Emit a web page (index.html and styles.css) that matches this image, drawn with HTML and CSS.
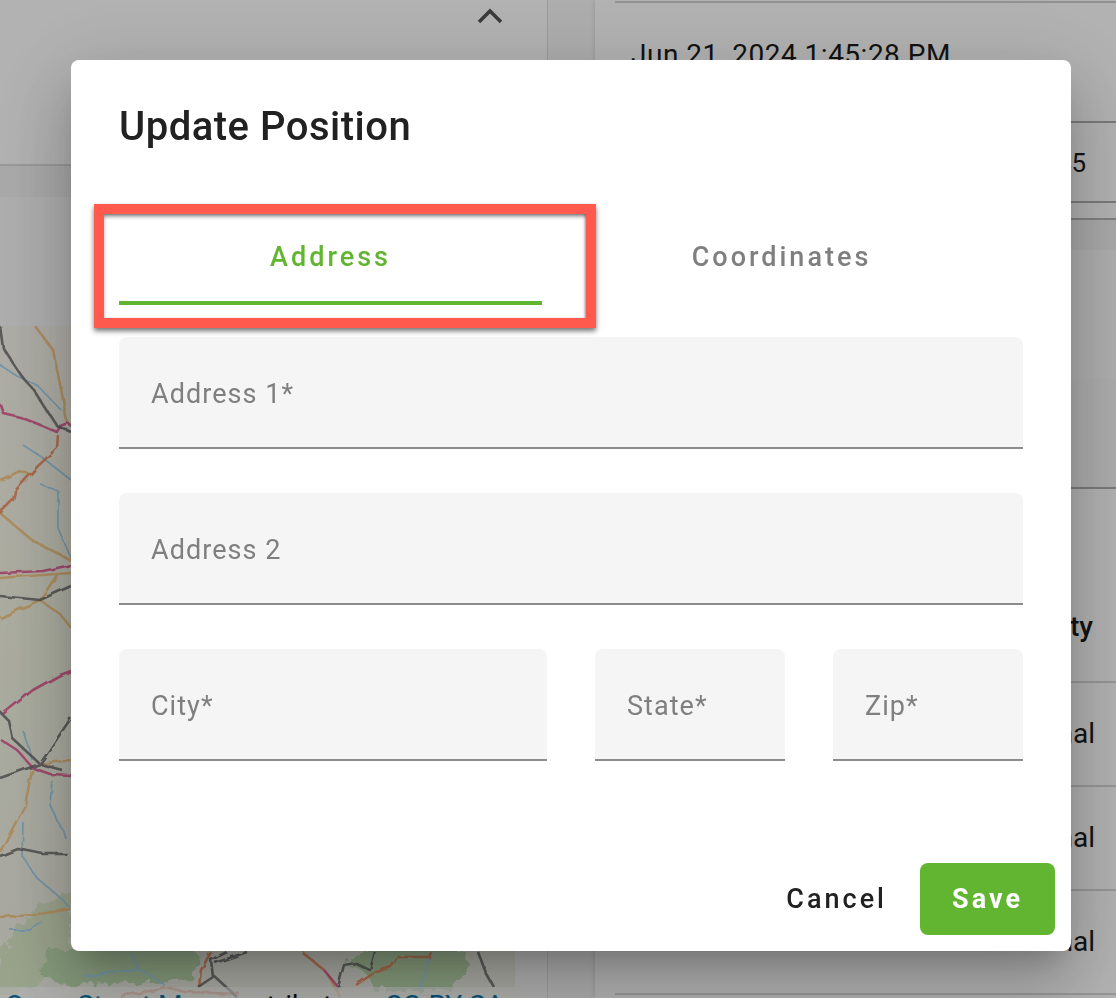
FILE: index.html
```html
<!DOCTYPE html>
<html lang="en">
<head>
  <meta charset="UTF-8">
  <title>Update Position</title>
  <link rel="stylesheet" href="styles.css">
</head>
<body>
<div class="page">
  <div class="left-col">
    <div class="summary-card">
      <svg class="chevron" width="26" height="16" viewBox="0 0 26 16"><path d="M2 14 L13 3 L24 14" fill="none" stroke="#555" stroke-width="3.6"/></svg>
    </div>
    <div class="left-gap"></div>
    <div class="map-head"></div>
    <div class="map">
      <svg class="map-art" width="515" height="672" viewBox="0 326 515 672">
        <defs>
          <filter id="rough" x="-5%" y="-5%" width="110%" height="110%">
            <feTurbulence type="fractalNoise" baseFrequency="0.09" numOctaves="3" seed="4"/>
            <feDisplacementMap in="SourceGraphic" scale="16"/>
          </filter>
          <filter id="wiggle" x="-5%" y="-5%" width="110%" height="110%">
            <feTurbulence type="fractalNoise" baseFrequency="0.07" numOctaves="2" seed="9"/>
            <feDisplacementMap in="SourceGraphic" scale="5"/>
          </filter>
        </defs>
        <g class="green" filter="url(#rough)">
          <path d="M0 955 L30 915 L71 890 L71 952 L40 985 L0 998 Z" class="green-faint"/>
          <path d="M50 948 L198 948 L196 980 L70 986 L40 975 Z"/>
          <path d="M345 962 L375 948 L462 948 L470 965 L450 990 L372 990 L368 975 Z"/>
        </g>
        <g class="water" filter="url(#wiggle)">
          <path d="M0 365 L17 376 L37 385 L62 411"/>
          <path d="M23 445 L43 458 L71 480"/>
          <path d="M40 484 L58 491 L58 528 L71 558"/>
          <path d="M23 731 L33 761"/>
          <path d="M52 781 L50 805 L67 840"/>
          <path d="M23 822 L22 856 L37 878 L63 900 L71 909"/>
          <path d="M10 930 L30 930 L43 922"/>
          <path d="M85 977 L110 972 L140 970 L150 975 L165 985"/>
          <path d="M130 952 L140 972"/>
          <path d="M432 952 L425 968 L420 990"/>
        </g>
        <g class="road orange" filter="url(#wiggle)">
          <path d="M35 326 L53 350 L62 394 L67 422"/>
          <path d="M0 480 L18 472 L32 474"/>
          <path d="M0 513 L33 541 L71 560"/>
          <path d="M0 578 L71 573"/>
          <path d="M0 618 L40 600 L57 575"/>
          <path d="M40 600 L60 614 L71 628"/>
          <path d="M32 770 L25 805 L0 852"/>
          <path d="M0 917 L33 915 L71 909"/>
          <path d="M328 975 L340 997"/>
          <path d="M40 764 L71 760"/>
        </g>
        <g class="road redorange" filter="url(#wiggle)">
          <path d="M58 435 L57 448 L37 467 L15 491 L13 500 L0 513"/>
          <path d="M211 952 L201 970 L199 987"/>
          <path d="M302 952 L324 970"/>
          <path d="M431 952 L429 957 L399 957 L391 967 L374 973 L356 985"/>
          <path d="M120 996 L150 991 L170 988 L185 992 L240 994"/>
        </g>
        <g class="road pink" filter="url(#wiggle)">
          <path d="M0 404 L3 413 L20 417 L43 426 L57 432 L60 426 L68 423 L71 426"/>
          <path d="M0 573 L43 571 L71 565"/>
          <path d="M3 714 L33 690 L60 675 L71 671"/>
          <path d="M0 739 L17 750 L33 768 L50 774 L71 775"/>
          <path d="M324 970 L338 987"/>
        </g>
        <g class="road grey" filter="url(#wiggle)">
          <path d="M0 326 L3 348 L23 378 L33 389 L57 426 L71 432"/>
          <path d="M0 596 L40 600 L71 586"/>
          <path d="M0 712 L8 720 L12 738 L40 764 L71 718"/>
          <path d="M0 778 L40 764 L62 770"/>
          <path d="M0 856 L18 849 L43 854 L67 854"/>
          <path d="M227 952 L211 960 L213 977 L198 987"/>
          <path d="M247 952 L215 963"/>
          <path d="M213 975 L237 997"/>
          <path d="M375 952 L370 970 L356 963 L344 965 L338 987"/>
          <path d="M478 952 L486 973 L494 987"/>
        </g>
      </svg>
      <div class="attribution"><span class="link">Open Street Map</span> contributors, <span class="link">CC-BY-SA</span></div>
    </div>
  </div>
  <div class="right-col">
    <div class="date-row">Jun 21, 2024 1:45:28 PM</div>
    <div class="value-row">12345</div>
    <div class="right-spacer"></div>
    <div class="right-band"></div>
    <div class="panel-head"></div>
    <div class="panel-sub"></div>
    <div class="table-head">Priority</div>
    <div class="table-row">Normal</div>
    <div class="table-row">Normal</div>
    <div class="table-row">Normal</div>
  </div>
</div>

<div class="overlay">
  <div class="modal">
    <h2 class="modal-title">Update Position</h2>
    <div class="tabs">
      <div class="tab tab-active">Address</div>
      <div class="tab">Coordinates</div>
    </div>
    <div class="field"><span class="field-label">Address 1*</span></div>
    <div class="field"><span class="field-label">Address 2</span></div>
    <div class="field-row">
      <div class="field"><span class="field-label">City*</span></div>
      <div class="field"><span class="field-label">State*</span></div>
      <div class="field"><span class="field-label">Zip*</span></div>
    </div>
    <div class="actions">
      <button class="btn btn-cancel">Cancel</button>
      <button class="btn btn-save">Save</button>
    </div>
  </div>
  <div class="callout"></div>
</div>
</body>
</html>
```

FILE: styles.css
```css
html, body {
  margin: 0;
  height: 100%;
  overflow: hidden;
}
body {
  font-family: Roboto, "Liberation Sans", sans-serif;
  color: #212121;
}

/* page behind the dialog */
.page {
  display: grid;
  grid-template-columns: 548px 1fr;
  column-gap: 47px;
  height: 998px;
  overflow: hidden;
  background: #f8f8f8;
}
.left-col {
  height: 998px;
  overflow: hidden;
  background: #fbfbfb;
  border-right: 1px solid #e0e0e0;
  box-sizing: content-box;
}
.summary-card {
  display: flex;
  justify-content: flex-end;
  box-sizing: border-box;
  height: 166px;
  padding: 8px 44px 0 0;
  border-bottom: 2px solid #dcdcdc;
  background: #fff;
}
.chevron {
  display: block;
}
.left-gap {
  height: 31px;
  background: #f3f3f3;
}
.map-head {
  height: 129px;
  background: #fafafa;
}
.map {
  position: relative;
  width: 515px;
  height: 672px;
  background: linear-gradient(#f9f7ee, #f5f7e4 50%, #f1f1e8);
}
.map-art {
  display: block;
  filter: blur(0.7px);
}
.road path, .water path {
  fill: none;
  stroke-linejoin: round;
}
.road { opacity: 0.85; }
.road path { stroke-width: 2.6px; }
.water path {
  stroke: #a9d6ee;
  stroke-width: 1.8px;
}
.green path { fill: #bedcb0; }
.green .green-faint { fill: #dce9c8; }
.orange path { stroke: #f6c47c; }
.redorange path { stroke: #f08a5c; }
.pink path { stroke: #e2558f; }
.grey path { stroke: #6e6e6e; }
.attribution {
  position: absolute;
  left: 0;
  bottom: 0;
  width: 515px;
  height: 11px;
  padding: 3px 0 0 5px;
  box-sizing: border-box;
  font-size: 28px;
  line-height: 32px;
  white-space: nowrap;
  overflow: hidden;
  background: rgba(255,255,255,.62);
  color: #111;
}
.link { color: #0b78b0; }

.right-col {
  height: 998px;
  overflow: hidden;
  padding-left: 20px;
  box-shadow: -2px 0 3px rgba(0,0,0,.08);
  background: #fff;
  font-size: 26px;
  color: #1a1a1a;
}
.date-row {
  box-sizing: border-box;
  height: 122px;
  margin-top: 1px;
  padding: 37px 0 0 16px;
  font-size: 28px;
  letter-spacing: 0.5px;
  line-height: 30px;
  border-top: 2px solid #d0d0d0;
  border-bottom: 2px solid #b0b0b0;
}
.value-row {
  box-sizing: border-box;
  height: 80px;
  padding: 25px 30px 0 0;
  text-align: right;
  line-height: 30px;
  border-bottom: 2px solid #b0b0b0;
}
.right-spacer {
  height: 15px;
  margin-left: -20px;
}
.right-band {
  height: 32px;
  margin-left: -20px;
  border-top: 2px solid #b8b8b8;
  box-sizing: border-box;
  background: #f3f3f3;
}
.panel-head {
  height: 129px;
  margin-left: -20px;
  background: #fbfbfb;
}
.panel-sub {
  box-sizing: border-box;
  height: 110px;
  border-bottom: 2px solid #b0b0b0;
  margin-left: -20px;
  background: #f8f8f8;
}
.table-head, .table-row {
  box-sizing: border-box;
  height: 104px;
  padding-right: 21px;
  text-align: right;
  font-size: 28px;
  border-bottom: 2px solid #d8d8d8;
}
.table-head {
  height: 194px;
  padding: 122px 23px 0 0;
  font-weight: 500;
  line-height: 32px;
}
.table-row {
  padding-top: 35px;
  line-height: 32px;
}

/* dialog */
.overlay {
  position: fixed;
  inset: 0;
  padding: 60px 0 0 71px;
  background: rgba(0,0,0,.3);
}
.modal {
  box-sizing: border-box;
  width: 1000px;
  height: 891px;
  padding: 0 48px;
  border-radius: 8px;
  background: #fff;
  box-shadow: 0 18px 26px -12px rgba(0,0,0,.2), 0 40px 66px 5px rgba(0,0,0,.14), 0 16px 80px 14px rgba(0,0,0,.12);
}
.modal-title {
  margin: 0;
  padding-top: 43px;
  height: 144px;
  box-sizing: border-box;
  font-size: 40px;
  font-weight: 500;
  line-height: 48px;
  letter-spacing: 0.5px;
  color: #212121;
}
.tabs {
  display: grid;
  grid-template-columns: 423px 423px;
  column-gap: 28px;
  height: 133px;
}
.tab {
  box-sizing: border-box;
  height: 101px;
  padding-top: 33px;
  text-align: center;
  font-size: 27px;
  font-weight: 500;
  line-height: 40px;
  letter-spacing: 3px;
  color: #7f7f7f;
}
.tab-active {
  color: #62b531;
  border-bottom: 4px solid #62b531;
}
.field {
  box-sizing: border-box;
  height: 112px;
  margin-bottom: 44px;
  padding: 39px 32px 0;
  border-radius: 8px 8px 0 0;
  border-bottom: 2px solid #8c8c8c;
  background: #f5f5f5;
}
.field-label {
  display: block;
  font-size: 27px;
  line-height: 36px;
  letter-spacing: 1.05px;
  color: #7f7f7f;
  white-space: nowrap;
}
.field-row {
  display: grid;
  grid-template-columns: 428px 190px 190px;
  column-gap: 48px;
}
.actions {
  display: flex;
  justify-content: flex-end;
  align-items: center;
  gap: 33px;
  margin: 58px -32px 0 0;
}
.btn {
  height: 72px;
  border: 0;
  border-radius: 8px;
  background: none;
  font-family: inherit;
  font-size: 27px;
  font-weight: 500;
  letter-spacing: 3px;
  padding: 0;
  color: #212121;
}
.btn-save {
  width: 135px;
  font-weight: 700;
  color: #fff;
  background: #62b531;
}

/* red marker over the first tab */
.callout {
  position: absolute;
  left: 94px;
  top: 204px;
  width: 502px;
  height: 124px;
  box-sizing: border-box;
  border: 10px solid #ff5a4d;
  box-shadow: 0 3px 5px rgba(0,0,0,.55), inset 0 3px 4px -1px rgba(0,0,0,.55), inset -2px 0 3px -1px rgba(0,0,0,.3);
}
```
